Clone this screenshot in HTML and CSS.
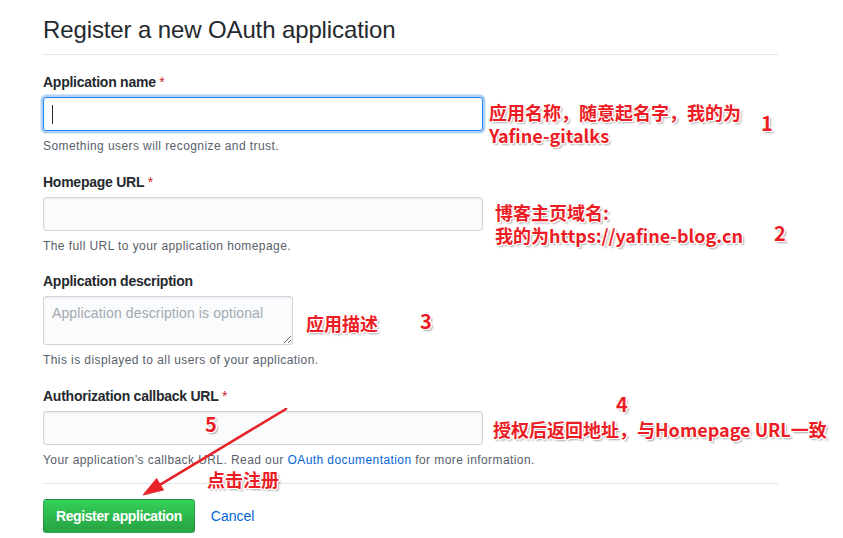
FILE: index.html
```html
<!DOCTYPE html>
<html lang="en">
<head>
<meta charset="utf-8">
<title>Register a new OAuth application</title>
<link rel="stylesheet" href="styles.css">
</head>
<body>
<div class="page">
  <main class="content">
    <div class="subhead">
      <h2 class="subhead-title">Register a new OAuth application</h2>
    </div>
    <form class="form">
      <dl class="form-group">
        <dt class="label">Application name <span class="req">*</span></dt>
        <dd class="field">
          <div class="input input-focus"><span class="caret"></span></div>
          <p class="note">Something users will recognize and trust.</p>
        </dd>
      </dl>
      <dl class="form-group">
        <dt class="label">Homepage URL <span class="req">*</span></dt>
        <dd class="field">
          <div class="input"></div>
          <p class="note">The full URL to your application homepage.</p>
        </dd>
      </dl>
      <dl class="form-group">
        <dt class="label">Application description</dt>
        <dd class="field">
          <textarea class="textarea" placeholder="Application description is optional"></textarea>
          <p class="note">This is displayed to all users of your application.</p>
        </dd>
      </dl>
      <dl class="form-group">
        <dt class="label">Authorization callback URL <span class="req">*</span></dt>
        <dd class="field">
          <div class="input"></div>
          <p class="note">Your application’s callback URL. Read our <a class="link" href="#">OAuth documentation</a> for more information.</p>
        </dd>
      </dl>
      <hr class="divider">
      <div class="actions">
        <button type="button" class="btn-primary">Register application</button>
        <a class="cancel" href="#">Cancel</a>
      </div>
    </form>
  </main>

  <svg class="arrow" width="843" height="538" viewBox="0 0 843 538" aria-hidden="true">
    <line x1="286" y1="409" x2="159" y2="485.3" stroke="#e8232a" stroke-width="2.6" stroke-linecap="round"/>
    <polygon points="143,495 163.5,490 156.6,478.6" fill="#e8232a" stroke="#e8232a" stroke-width="1" stroke-linejoin="round"/>
  </svg>

  <div class="anno anno-1"><div class="anno-line">应用名称，随意起名字，我的为</div><div class="anno-line">Yafine-gitalks</div></div>
  <div class="num num-1">1</div>
  <div class="anno anno-2"><div class="anno-line">博客主页域名:</div><div class="anno-line">我的为https://yafine-blog.cn</div></div>
  <div class="num num-2">2</div>
  <div class="anno anno-3">应用描述</div>
  <div class="num num-3">3</div>
  <div class="num num-4">4</div>
  <div class="anno anno-4">授权后返回地址，与Homepage URL一致</div>
  <div class="num num-5">5</div>
  <div class="anno anno-5">点击注册</div>
</div>
</body>
</html>
```

FILE: styles.css
```css
html, body {
  margin: 0;
  padding: 0;
  background: #ffffff;
}

body {
  font-family: "Liberation Sans", Arial, sans-serif;
  color: #24292e;
}

.page {
  position: relative;
  width: 843px;
  height: 538px;
  overflow: hidden;
}

.content {
  width: 735px;
  padding-left: 43px;
}

.subhead {
  border-bottom: 1px solid #e1e4e8;
  padding-bottom: 6px;
  margin-bottom: 17px;
}

.subhead-title {
  margin: 0;
  padding-top: 12px;
  font-size: 24px;
  line-height: 36px;
  font-weight: 400;
  letter-spacing: -0.12px;
  color: #24292e;
}

.form {
  margin: 0;
}

.form-group {
  margin: 0 0 16.5px 0;
}

.label {
  font-size: 14px;
  line-height: 21px;
  font-weight: 700;
  letter-spacing: -0.25px;
  margin-bottom: 4px;
  color: #24292e;
}

.req {
  color: #cb2431;
  font-weight: 400;
  letter-spacing: 0;
}

.field {
  margin: 0;
}

.input {
  box-sizing: border-box;
  width: 440px;
  height: 34px;
  background: #fafbfc;
  border: 1px solid #d1d5da;
  border-radius: 3px;
  box-shadow: inset 0 1px 2px rgba(27, 31, 35, 0.075);
  padding: 0 8px;
  display: flex;
  align-items: center;
}

.input-focus {
  background: #ffffff;
  border-color: #2188ff;
  box-shadow: inset 0 1px 2px rgba(27, 31, 35, 0.075), 0 0 0 2.5px rgba(3, 102, 214, 0.3);
}

.caret {
  display: block;
  width: 1px;
  height: 19px;
  background: #24292e;
}

.textarea {
  display: block;
  box-sizing: border-box;
  width: 250px;
  height: 49px;
  margin: 0;
  padding: 6px 8px;
  background: #fafbfc;
  border: 1px solid #d1d5da;
  border-radius: 3px;
  box-shadow: inset 0 1px 2px rgba(27, 31, 35, 0.075);
  font-family: "Liberation Sans", Arial, sans-serif;
  font-size: 14px;
  line-height: 20px;
  letter-spacing: 0.12px;
  color: #24292e;
  resize: both;
}

.textarea::placeholder {
  color: #a3aab1;
}

.note {
  margin: 6px 0 0 0;
  font-size: 12px;
  line-height: 18px;
  letter-spacing: 0.42px;
  color: #586069;
}

.link {
  color: #0366d6;
  text-decoration: none;
}

.divider {
  margin: -2.5px 0 15px 0;
  border: 0;
  border-top: 1px solid #e1e4e8;
  height: 0;
}

.actions {
  display: flex;
  align-items: center;
  gap: 16px;
}

.btn-primary {
  box-sizing: border-box;
  height: 34px;
  padding: 6px 12px;
  font-family: "Liberation Sans", Arial, sans-serif;
  font-size: 14px;
  line-height: 20px;
  font-weight: 700;
  letter-spacing: -0.4px;
  color: #ffffff;
  background-color: #28a745;
  background-image: linear-gradient(180deg, #34d058 0%, #28a745 90%);
  border: 1px solid rgba(27, 31, 35, 0.2);
  border-radius: 3.5px;
}

.cancel {
  font-size: 14px;
  color: #0366d6;
  text-decoration: none;
}

/* annotation overlay */
.arrow {
  position: absolute;
  left: 0;
  top: 0;
  pointer-events: none;
}

.anno,
.num {
  position: absolute;
  color: #ec1c24;
  font-family: "Noto Sans CJK SC", "Liberation Sans", sans-serif;
  font-weight: 700;
  white-space: nowrap;
  text-shadow:
    -1px -1px 0 #fff, 1px -1px 0 #fff, -1px 1px 0 #fff, 1px 1px 0 #fff,
    0 -1px 0 #fff, 0 1px 0 #fff, -1px 0 0 #fff, 1px 0 0 #fff,
    2px 2px 2px rgba(0, 0, 0, 0.35);
}

.anno {
  font-size: 18px;
  line-height: 23px;
}

.anno-line {
  height: 23px;
}

.num {
  font-size: 20px;
  line-height: 20px;
}

.anno-1 { left: 489px; top: 101px; }
.anno-2 { left: 495px; top: 201px; }
.anno-3 { left: 306px; top: 312px; }
.anno-4 { left: 493px; top: 418px; }
.anno-5 { left: 207px; top: 468px; }

.num-1 { left: 761px; top: 113px; }
.num-2 { left: 774px; top: 223px; }
.num-3 { left: 420px; top: 311px; }
.num-4 { left: 616px; top: 394px; }
.num-5 { left: 205px; top: 414px; }
```
